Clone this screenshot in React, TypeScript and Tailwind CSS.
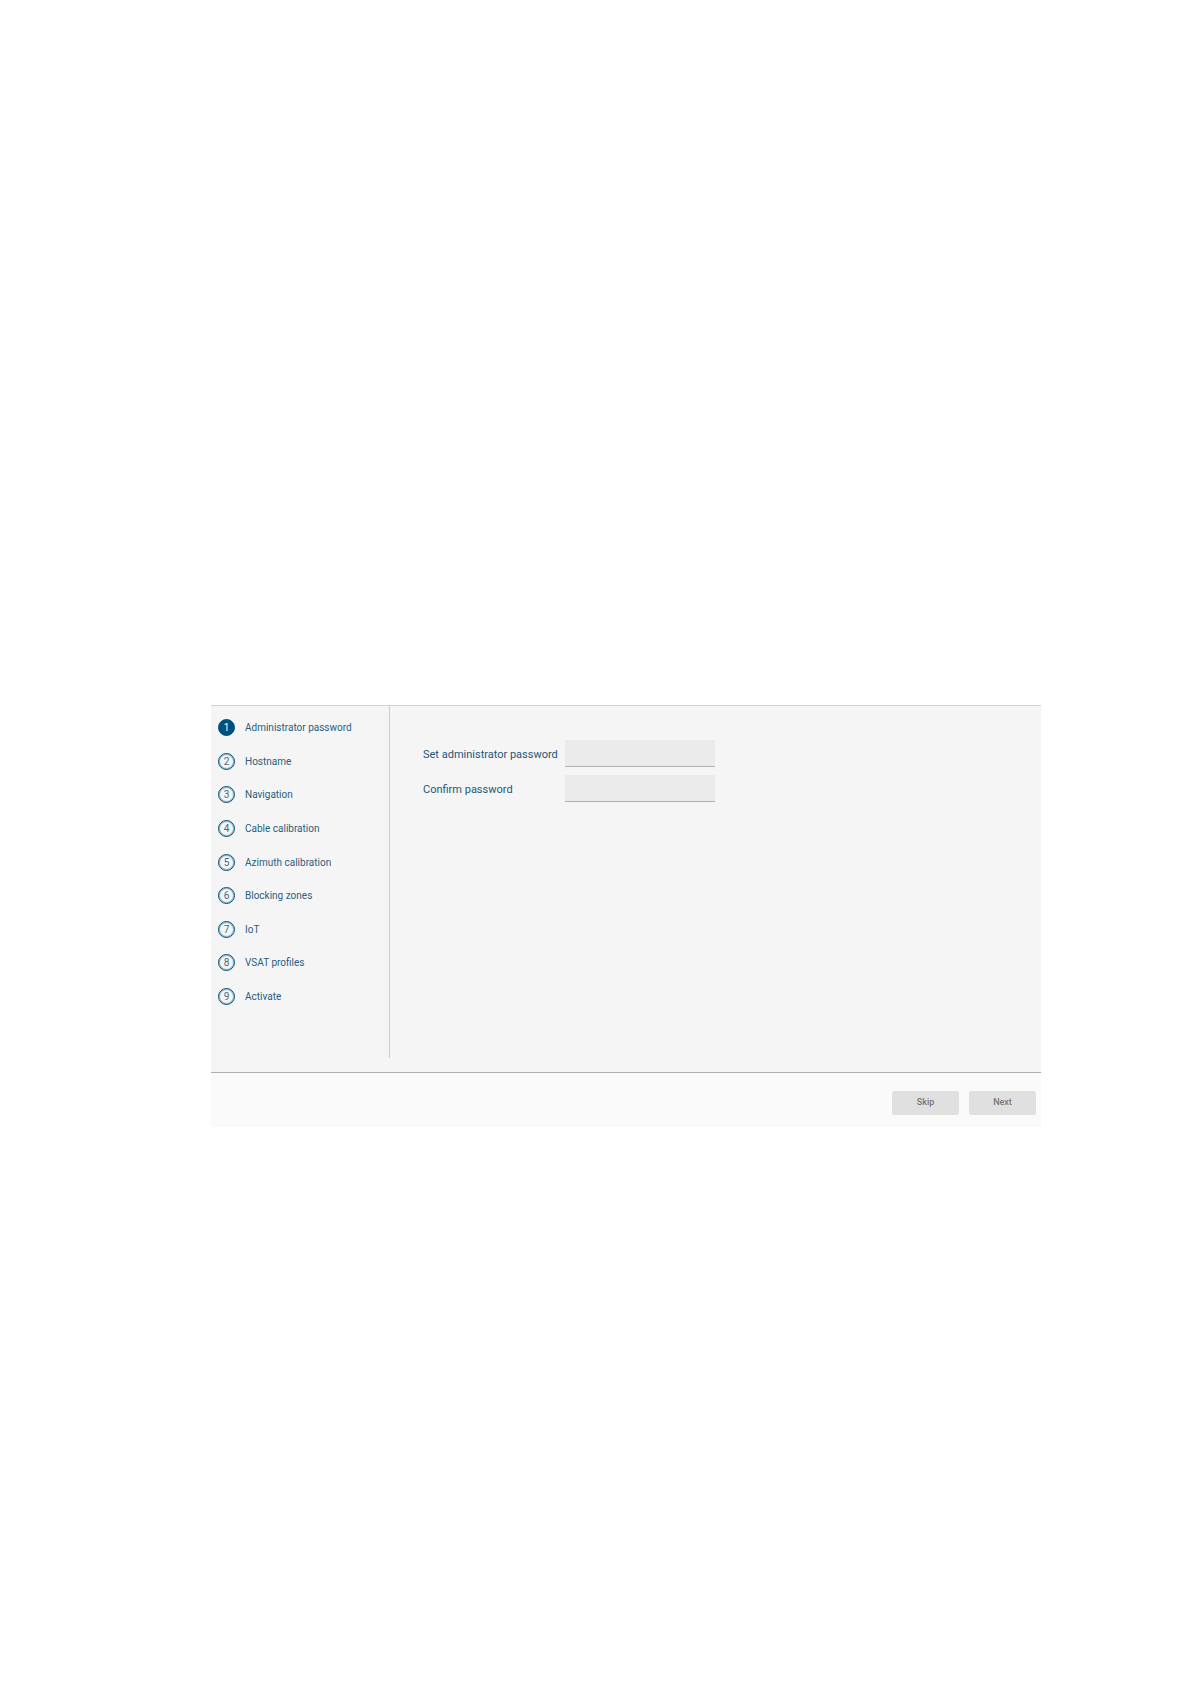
import { useState } from 'react';

const STEPS = [
    'Administrator password',
    'Hostname',
    'Navigation',
    'Cable calibration',
    'Azimuth calibration',
    'Blocking zones',
    'IoT',
    'VSAT profiles',
    'Activate',
];

function StepItem({ index, label, active, onSelect }: { index: number; label: string; active: boolean; onSelect: () => void }) {
    return (
        <li>
            <button type="button" onClick={onSelect} aria-current={active ? 'step' : undefined} className="flex items-center gap-2.5">
                <span
                    className={`flex h-[17px] w-[17px] items-center justify-center rounded-full border border-[#004f7c] inset-ring inset-ring-[#004f7c]/40 ${
                        active ? 'bg-[#004f7c] text-white' : 'text-[#3f6a84]'
                    }`}
                >
                    {index}
                </span>
                <span>{label}</span>
            </button>
        </li>
    );
}

function PasswordField({ id, label }: { id: string; label: string }) {
    return (
        <div className="flex items-center">
            <label htmlFor={id} className="w-[142px] shrink-0 pt-[3px]">
                {label}
            </label>
            <input
                id={id}
                type="password"
                className="h-[27px] w-[150px] rounded-none border-b border-[#b0b0b0] bg-[#ebebeb] px-2 outline-none focus:border-[#004f7c]"
            />
        </div>
    );
}

export default function App() {
    const [step, setStep] = useState(0);
    const next = () => setStep((s) => Math.min(s + 1, STEPS.length - 1));

    return (
        <div className="min-h-screen bg-white pt-[705px] pr-[149px] pl-[211px] font-['Roboto',sans-serif]">
            <main className="flex border-t border-b border-t-[#d2d4d4] border-b-[#aeb0b0] bg-[#f5f5f5] pb-[14px]">
                <nav className="w-[179px] shrink-0 border-r border-[#cccccc] pt-[13px] pb-[53px] pl-[7px]">
                    <ol className="flex h-[286px] flex-col justify-between text-[10px] leading-[17px] text-[#2a5f7e]">
                        {STEPS.map((label, i) => (
                            <StepItem key={label} index={i + 1} label={label} active={i === step} onSelect={() => setStep(i)} />
                        ))}
                    </ol>
                </nav>

                <form className="flex flex-col gap-2 pt-[34px] pl-[33px] text-[11px] text-[#1f5578]">
                    <PasswordField id="password" label="Set administrator password" />
                    <PasswordField id="confirm" label="Confirm password" />
                </form>
            </main>

            <footer className="flex justify-end gap-2.5 bg-[#fafafa] pt-[18px] pr-[5px] pb-3 text-[9px] font-medium text-[#777777]">
                <button type="button" onClick={next} className="h-6 w-[67px] rounded-xs bg-[#e0e0e0]">
                    Skip
                </button>
                <button type="button" onClick={next} className="h-6 w-[67px] rounded-xs bg-[#e0e0e0]">
                    Next
                </button>
            </footer>
        </div>
    );
}
